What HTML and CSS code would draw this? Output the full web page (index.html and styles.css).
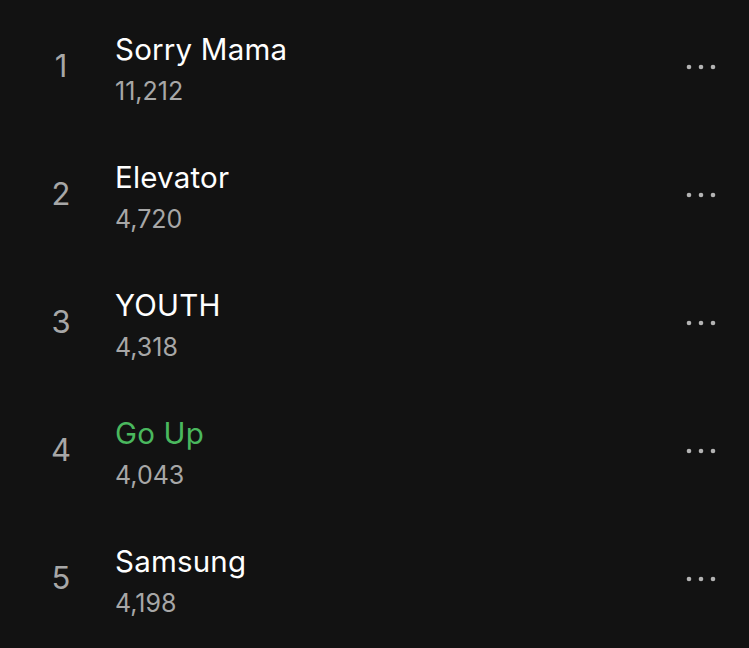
FILE: index.html
```html
<!DOCTYPE html>
<html lang="en">
<head>
<meta charset="utf-8">
<title>Popular tracks</title>
<link rel="stylesheet" href="styles.css">
</head>
<body>
<ul class="tracks">
  <li class="track">
    <span class="num">1</span>
    <div class="info"><div class="title">Sorry Mama</div><div class="plays">11,212</div></div>
    <svg class="more" viewBox="0 0 30 6" width="30" height="6"><circle cx="3" cy="3" r="2.3"/><circle cx="15" cy="3" r="2.3"/><circle cx="27" cy="3" r="2.3"/></svg>
  </li>
  <li class="track">
    <span class="num">2</span>
    <div class="info"><div class="title">Elevator</div><div class="plays">4,720</div></div>
    <svg class="more" viewBox="0 0 30 6" width="30" height="6"><circle cx="3" cy="3" r="2.3"/><circle cx="15" cy="3" r="2.3"/><circle cx="27" cy="3" r="2.3"/></svg>
  </li>
  <li class="track">
    <span class="num">3</span>
    <div class="info"><div class="title">YOUTH</div><div class="plays">4,318</div></div>
    <svg class="more" viewBox="0 0 30 6" width="30" height="6"><circle cx="3" cy="3" r="2.3"/><circle cx="15" cy="3" r="2.3"/><circle cx="27" cy="3" r="2.3"/></svg>
  </li>
  <li class="track">
    <span class="num">4</span>
    <div class="info"><div class="title playing">Go Up</div><div class="plays">4,043</div></div>
    <svg class="more" viewBox="0 0 30 6" width="30" height="6"><circle cx="3" cy="3" r="2.3"/><circle cx="15" cy="3" r="2.3"/><circle cx="27" cy="3" r="2.3"/></svg>
  </li>
  <li class="track">
    <span class="num">5</span>
    <div class="info"><div class="title">Samsung</div><div class="plays">4,198</div></div>
    <svg class="more" viewBox="0 0 30 6" width="30" height="6"><circle cx="3" cy="3" r="2.3"/><circle cx="15" cy="3" r="2.3"/><circle cx="27" cy="3" r="2.3"/></svg>
  </li>
</ul>
</body>
</html>
```
FILE: styles.css
```css
html, body {
  margin: 0;
  padding: 0;
  background: #121212;
}
body {
  width: 749px;
  height: 648px;
  overflow: hidden;
  font-family: Inter, "Liberation Sans", sans-serif;
}
.tracks {
  list-style: none;
  margin: 0;
  padding: 0;
}
.track {
  display: flex;
  align-items: flex-start;
  height: 128px;
  box-sizing: border-box;
  padding-top: 29px;
}
.num {
  width: 40px;
  margin-left: 41px;
  margin-right: 34px;
  margin-top: 19px;
  text-align: center;
  font-size: 31px;
  line-height: 36px;
  color: #a7a7a7;
}
.info {
  flex: 1;
}
.title {
  margin-top: 2px;
  font-size: 29.5px;
  line-height: 36px;
  letter-spacing: 0.2px;
  color: #ffffff;
}
.title.playing {
  color: #4ab85e;
}
.plays {
  margin-top: 9px;
  font-size: 25px;
  line-height: 30px;
  color: #a7a7a7;
}
.more {
  margin-top: 35px;
  margin-right: 33px;
  fill: #b3b3b3;
}
```
